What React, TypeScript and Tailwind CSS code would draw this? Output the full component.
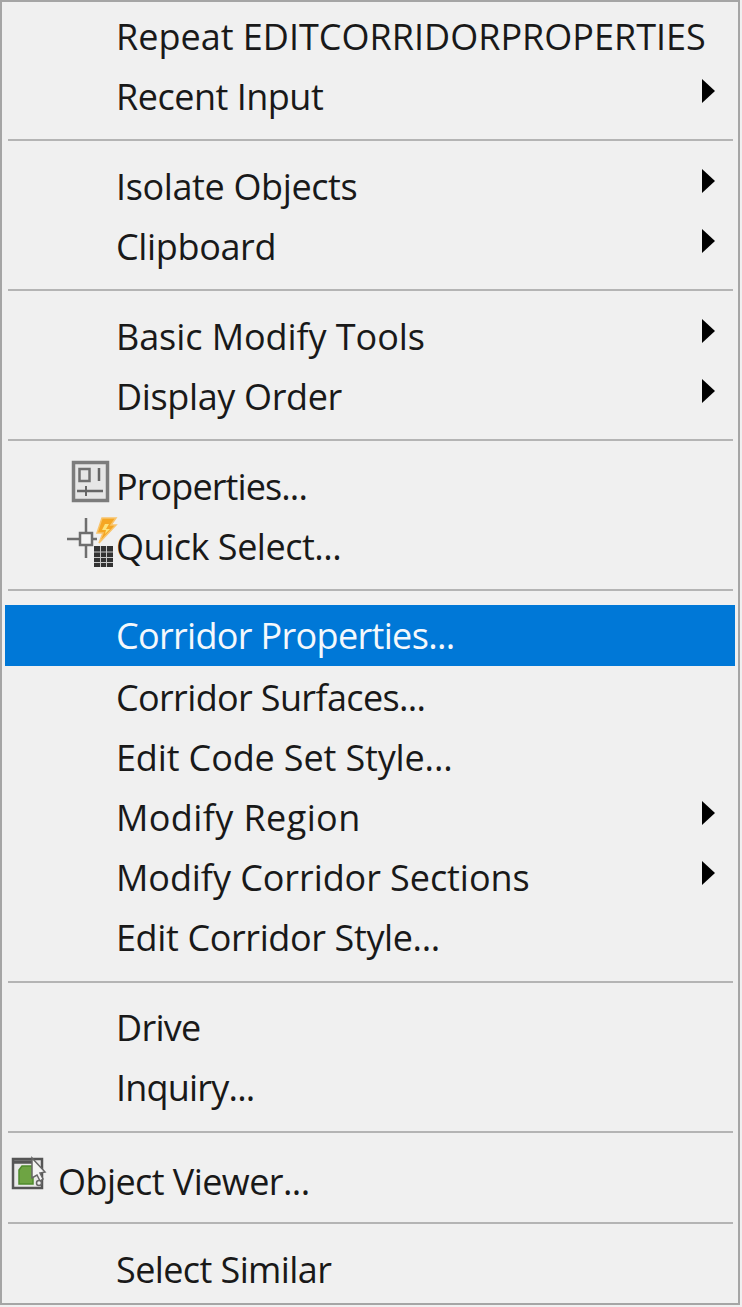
import React from "react";

const Sep = ({ h = 30, top = 13 }: { h?: number; top?: number }) => (
  <div className="pl-[6px] pr-[5px]" style={{ height: h, paddingTop: top }}>
    <div className="h-[2px] bg-[#b4b4b4]" />
  </div>
);

const Arrow = ({ shift = 0 }: { shift?: number }) => (
  <svg
    width="13"
    height="24"
    viewBox="0 0 13 24"
    className="absolute right-[20px]"
    style={{ top: 13 + shift }}
  >
    <polygon points="0,0 13,12 0,24" fill="#000" />
  </svg>
);

const Row = ({
  label, arrow, active, icon, left = 116, h = 60, shift = 1, arrowShift = 0, track,
}: {
  label: string; arrow?: boolean; active?: boolean; icon?: React.ReactNode;
  left?: number; h?: number; shift?: number; arrowShift?: number; track: string;
}) => (
  <div
    className={`relative flex items-center whitespace-pre mx-[3px] ${active ? "bg-[#0078d7] text-[#f4f8fc]" : "text-[#191919]"}`}
    style={{ height: h, paddingLeft: left - 5 }}
  >
    {icon}
    <span className={`relative ${track}`} style={{ top: shift }}>{label}</span>
    {arrow && <Arrow shift={arrowShift} />}
  </div>
);

const PropIcon = () => (
  <svg width="44" height="48" viewBox="0 0 44 48" className="absolute left-[64px] top-[1px]">
    <rect x="5" y="7" width="35" height="38" fill="#d0d0d0" opacity="0.5" />
    <rect x="4.500" y="5.500" width="34" height="38" fill="#e6e6e6" stroke="#7c7c7c" strokeWidth="3.500" />
    <rect x="10.500" y="12" width="10" height="12" fill="none" stroke="#707070" strokeWidth="2.500" />
    <path d="M30 11v13M8 34h26" stroke="#666" strokeWidth="2.500" fill="none" />
    <path d="M17 29v10" stroke="#666" strokeWidth="2" fill="none" />
  </svg>
);

const QuickIcon = () => (
  <svg width="52" height="54" viewBox="0 0 52 54" className="absolute left-[61px] top-0">
    <path d="M20 2v15M20 29v13M1 23h13M26 23h5" stroke="#6e6e6e" strokeWidth="2.500" fill="none" />
    <rect x="14" y="17" width="12" height="12" fill="#f4f4f4" stroke="#6e6e6e" strokeWidth="2.500" />
    <path d="M36 2h14l-5 7h5L33 27l4-10h-6z" fill="#f5a623" stroke="#f8c46c" strokeWidth="1.500" />
    <path d="M39 8h4l-3 5h4l-5 5 1-4h-4z" fill="#fde27a" />
    <rect x="28" y="30" width="19" height="21" fill="#333" />
    <path d="M28 36h19M28 41.500h19M28 46.500h19M34.500 30v21M40.500 30v21" stroke="#c8c8c8" strokeWidth="1" />
  </svg>
);

const ViewerIcon = () => (
  <svg width="38" height="36" viewBox="0 0 38 36" className="absolute left-[5px] top-[8px]">
    <rect x="3" y="3" width="29" height="29" fill="#e9e9e9" stroke="#555" strokeWidth="2.500" />
    <path d="M3 6h20" stroke="#555" strokeWidth="3.500" />
    <path d="M9 14l3-4h11v18H9z" fill="#6ea443" stroke="#4f8a2c" strokeWidth="1.500" />
    <path d="M22 2l13 14-5 1 3 6-3 2-3-6-5 3z" fill="#f4f4f4" stroke="#666" strokeWidth="1.500" />
    <circle cx="29" cy="27" r="2.500" fill="#eee" stroke="#666" strokeWidth="1.500" />
  </svg>
);

export default function App() {
  return (
    <div className="w-[742px] h-[1307px] bg-[#f0f0f0]">
      <div
        className="w-[740px] h-[1305px] bg-[#f0f0f0] border-[2px] border-[#a5a5a5] overflow-hidden text-[36px] leading-none pt-[4px]"
        style={{ fontFamily: '"Open Sans", "Noto Sans", sans-serif' }}
      >
        <Row track="tracking-[0px]" label="Repeat EDITCORRIDORPROPERTIES" />
        <Row track="tracking-[-0.5px]" label="Recent Input" arrow />
        <Sep />
        <Row track="tracking-[-0.37px]" label="Isolate Objects" arrow />
        <Row track="tracking-[-0.35px]" label="Clipboard" arrow />
        <Sep />
        <Row track="tracking-[-0.07px]" label="Basic Modify Tools" arrow />
        <Row track="tracking-[-0.36px]" label="Display Order" arrow />
        <Sep />
        <Row track="tracking-[-0.9px]" label="Properties..." icon={<PropIcon />} />
        <Row track="tracking-[-0.47px]" label="Quick Select..." icon={<QuickIcon />} />
        <Sep h={29} />
        <Row track="tracking-[-0.67px]" label="Corridor Properties..." active h={61} shift={0} />
        <Row track="tracking-[-0.64px]" label="Corridor Surfaces..." shift={2} />
        <Row track="tracking-[-0.14px]" label="Edit Code Set Style..." shift={2} />
        <Row track="tracking-[0.4px]" label="Modify Region" arrow shift={2} arrowShift={2} />
        <Row track="tracking-[-0.07px]" label="Modify Corridor Sections" arrow shift={2} arrowShift={2} />
        <Row track="tracking-[-0.38px]" label="Edit Corridor Style..." shift={2} />
        <Sep h={32} top={15} />
        <Row track="tracking-[-0.7px]" label="Drive" shift={0} />
        <Row track="tracking-[-0.8px]" label="Inquiry..." shift={0} />
        <Sep />
        <Row track="tracking-[-0.57px]" label="Object Viewer..." icon={<ViewerIcon />} left={58} shift={4} />
        <Sep top={14} />
        <Row track="tracking-[-0.6px]" label="Select Similar" shift={2} />
      </div>
    </div>
  );
}
